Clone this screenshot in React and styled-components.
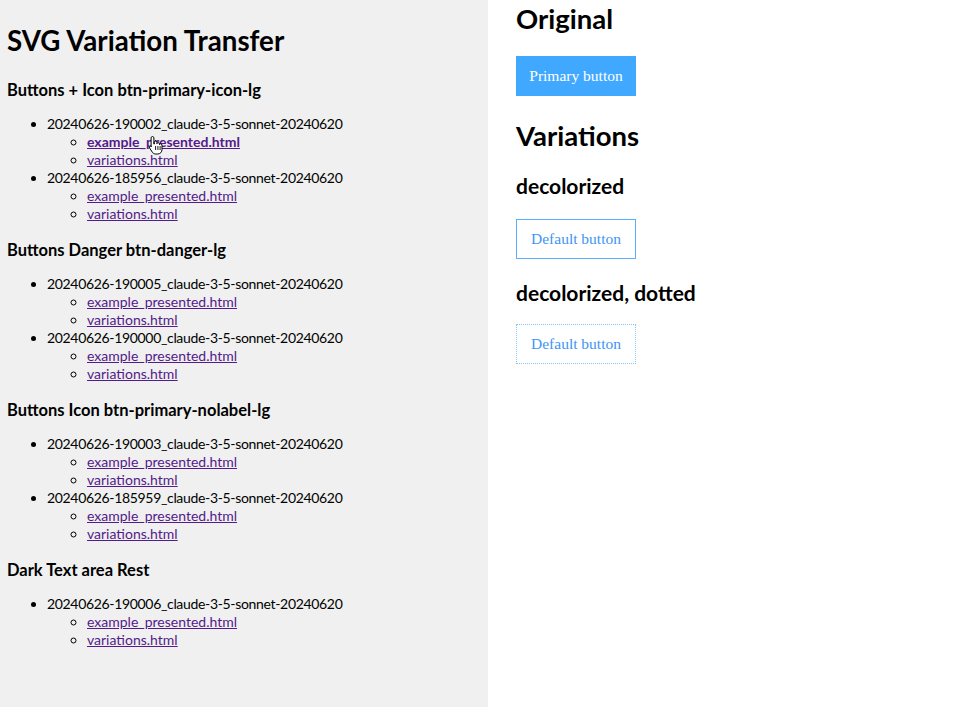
import React from 'react';
import styled, { createGlobalStyle } from 'styled-components';

const GlobalStyle = createGlobalStyle`
  html, body {
    margin: 0;
    padding: 0;
    background: #fff;
  }
  body {
    font-family: Lato, "Open Sans", sans-serif;
    color: #000;
  }
`;

const Page = styled.div`
  display: flex;
  width: 962px;
  height: 707px;
  overflow: hidden;
`;

const Sidebar = styled.div`
  width: 488px;
  flex-shrink: 0;
  background: #eff0ef;
  padding: 25px 7px 0;
  box-sizing: border-box;
  display: flex;
  flex-direction: column;
`;

const Title = styled.h1`
  margin: 0 0 24px;
  font-size: 27.7px;
  line-height: 32px;
  font-weight: 700;
`;

const Section = styled.section`
  margin-bottom: 18px;
`;

const SectionTitle = styled.h3`
  margin: 0 0 16px;
  font-size: 16.5px;
  line-height: 18px;
  font-weight: 700;
`;

const RunList = styled.ul`
  margin: 0;
  padding-left: 40px;
  list-style: disc;
  font-size: 14px;
  line-height: 18px;
`;

const RunName = styled.span`
  letter-spacing: -0.33px;
`;

const FileList = styled.ul`
  margin: 0;
  padding-left: 40px;
  list-style: circle;
`;

const FileLink = styled.a`
  color: #551a8b;
  text-decoration: underline;
  font-weight: ${(p) => (p.$active ? 700 : 400)};
  position: relative;
`;

const Cursor = styled.svg`
  position: absolute;
  left: 61px;
  top: 2px;
  width: 16px;
  height: 20px;
  pointer-events: none;
`;

const Main = styled.div`
  flex: 1;
  padding: 3px 28px 0;
  display: flex;
  flex-direction: column;
  align-items: flex-start;
`;

const Heading = styled.h2`
  margin: ${(p) => p.$top}px 0 0;
  font-size: 27.5px;
  line-height: 32px;
  font-weight: 700;
`;

const SubHeading = styled.h3`
  margin: 21px 0 0;
  font-size: 21px;
  line-height: 26px;
  font-weight: 700;
`;

const Button = styled.button`
  margin-top: ${(p) => p.$top}px;
  width: 120px;
  height: 40px;
  box-sizing: border-box;
  font-family: "Liberation Serif", serif;
  font-size: 15.5px;
  padding: 0;
  border-radius: 0;
  cursor: pointer;
  background: ${(p) => (p.$primary ? '#40a9ff' : '#fff')};
  color: ${(p) => (p.$primary ? '#fff' : '#3d95f5')};
  border: 1px ${(p) => (p.$dotted ? 'dotted' : 'solid')}
    ${(p) => (p.$primary ? '#40a9ff' : p.$dotted ? '#8cc4f0' : '#5aafff')};
`;

const sections = [
  {
    title: 'Buttons + Icon btn-primary-icon-lg',
    runs: ['20240626-190002_claude-3-5-sonnet-20240620', '20240626-185956_claude-3-5-sonnet-20240620'],
  },
  {
    title: 'Buttons Danger btn-danger-lg',
    runs: ['20240626-190005_claude-3-5-sonnet-20240620', '20240626-190000_claude-3-5-sonnet-20240620'],
  },
  {
    title: 'Buttons Icon btn-primary-nolabel-lg',
    runs: ['20240626-190003_claude-3-5-sonnet-20240620', '20240626-185959_claude-3-5-sonnet-20240620'],
  },
  {
    title: 'Dark Text area Rest',
    runs: ['20240626-190006_claude-3-5-sonnet-20240620'],
  },
];

const HandCursor = () => (
  <Cursor viewBox="0 0 16 20">
    <path
      d="M4.5 1.5c.8 0 1.4.6 1.4 1.4v6.2l.4-.1V7.4c0-.8.6-1.3 1.3-1.3s1.3.6 1.3 1.3v1.3c.1-.7.6-1.1 1.3-1.1.7 0 1.3.6 1.3 1.3v.8c.1-.6.6-1 1.2-1 .7 0 1.3.6 1.3 1.3v4.4c0 2.6-1.7 4.6-4.3 4.6H7.6c-1.4 0-2.4-.6-3.2-1.7L1.6 13c-.4-.6-.3-1.3.2-1.7.5-.4 1.3-.3 1.7.2l-.4.1V2.9c0-.8.6-1.4 1.4-1.4z"
      fill="#fff"
      stroke="#000"
      strokeWidth="1"
    />
    <path d="M7.6 11v4M9.9 11v4M12.1 11v4" stroke="#000" strokeWidth="0.9" />
  </Cursor>
);

export default function App() {
  return (
    <>
      <GlobalStyle />
      <Page>
        <Sidebar>
          <Title>SVG Variation Transfer</Title>
          {sections.map((s, si) => (
            <Section key={s.title}>
              <SectionTitle>{s.title}</SectionTitle>
              <RunList>
                {s.runs.map((r, ri) => (
                  <li key={r}>
                    <RunName>{r}</RunName>
                    <FileList>
                      <li>
                        <FileLink href="#" $active={si === 0 && ri === 0}>
                          example_presented.html
                          {si === 0 && ri === 0 && <HandCursor />}
                        </FileLink>
                      </li>
                      <li>
                        <FileLink href="#">variations.html</FileLink>
                      </li>
                    </FileList>
                  </li>
                ))}
              </RunList>
            </Section>
          ))}
        </Sidebar>
        <Main>
          <Heading $top={0}>Original</Heading>
          <Button $primary $top={21}>Primary button</Button>
          <Heading $top={24}>Variations</Heading>
          <SubHeading>decolorized</SubHeading>
          <Button $top={20}>Default button</Button>
          <SubHeading>decolorized, dotted</SubHeading>
          <Button $dotted $top={18}>Default button</Button>
        </Main>
      </Page>
    </>
  );
}
